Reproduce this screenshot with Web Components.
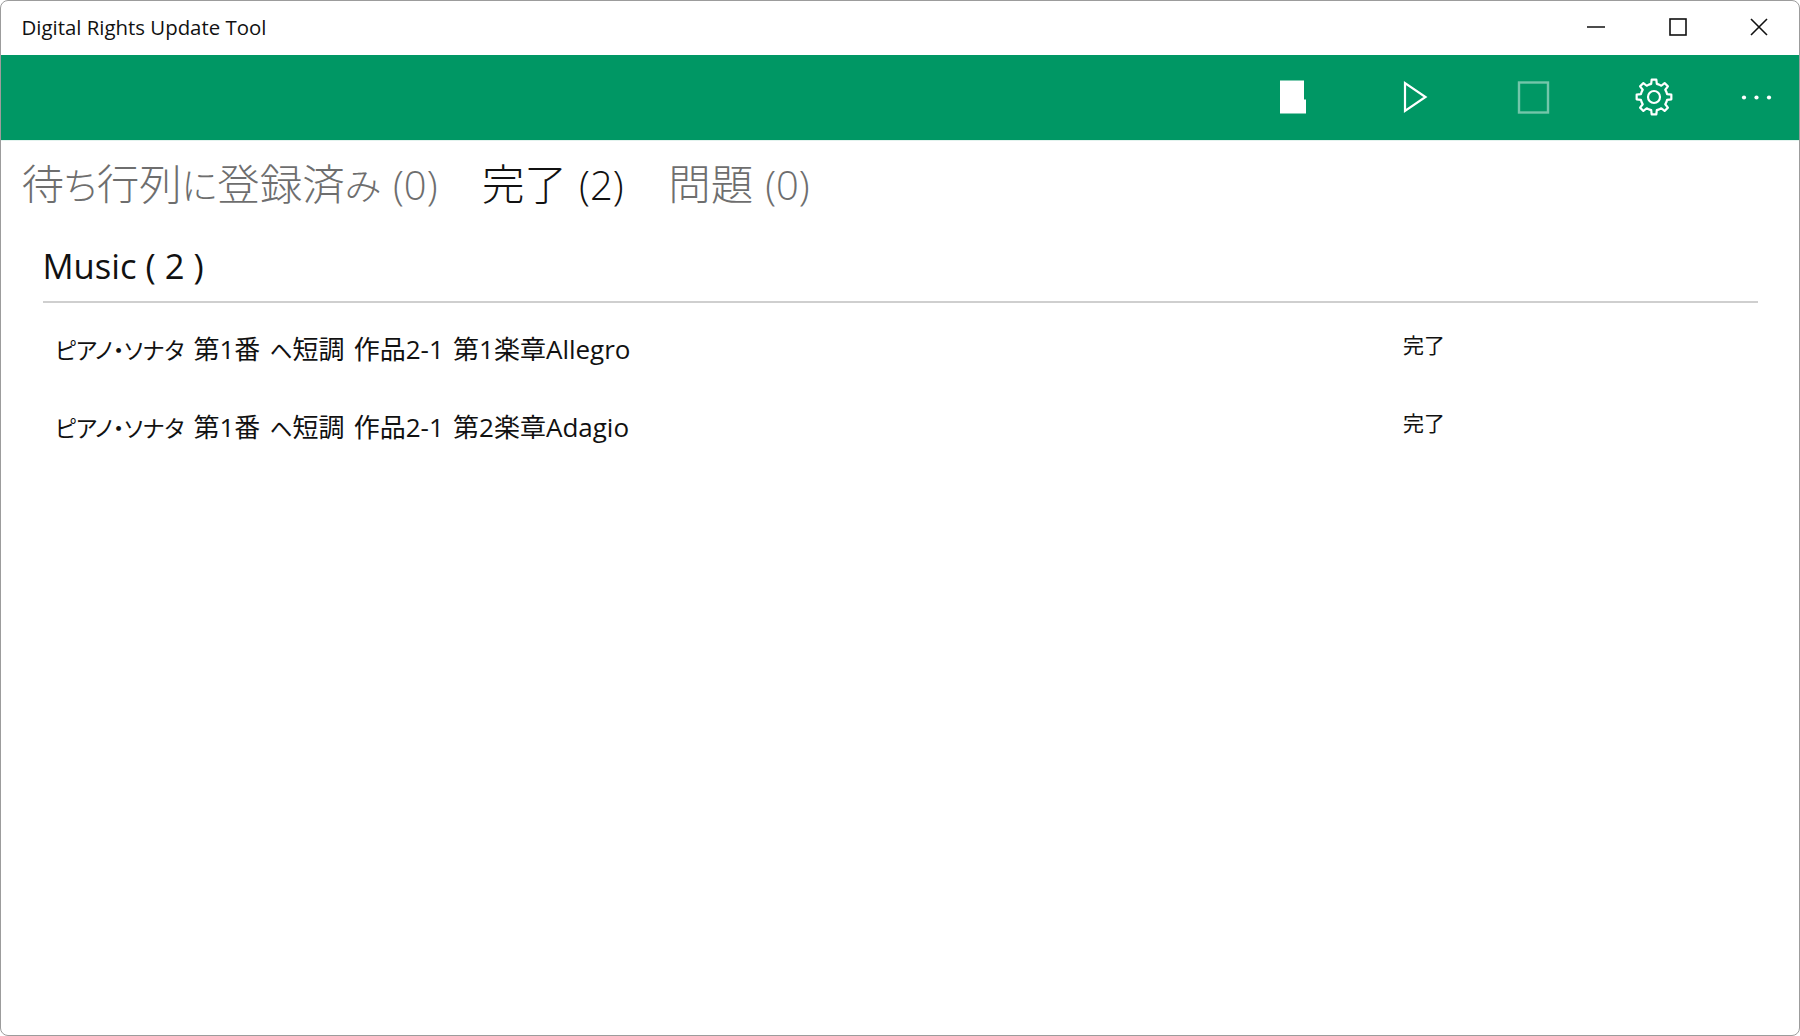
<!DOCTYPE html>
<html lang="ja">
<head>
<meta charset="utf-8">
<title>Digital Rights Update Tool</title>
<style>
  html, body { margin: 0; height: 100%; background: #fff; }
  body { font-family: "Open Sans", "Noto Sans CJK JP", sans-serif; }
  /* the original font draws kana smaller than kanji */
  .kana { font-size: .87em; }
</style>
</head>
<body>
<drm-window>
  <drm-titlebar slot="titlebar" label="Digital Rights Update Tool"></drm-titlebar>
  <drm-toolbar slot="toolbar">
    <drm-button icon="doc"></drm-button>
    <drm-button icon="play"></drm-button>
    <drm-button icon="stop" disabled></drm-button>
    <drm-button icon="gear"></drm-button>
    <drm-button icon="more" wide></drm-button>
  </drm-toolbar>
  <drm-tabs>
    <drm-tab count="(0)">待<span class="kana">ち</span>行列<span class="kana">に</span>登録済<span class="kana">み</span></drm-tab>
    <drm-tab count="(2)" active>完了</drm-tab>
    <drm-tab count="(0)">問題</drm-tab>
  </drm-tabs>
  <drm-group label="Music ( 2 )">
    <drm-row status="完了"><span class="kana">ピアノ・ソナタ</span> 第1番 <span class="kana">ヘ</span>短調 作品2-1 第1楽章Allegro</drm-row>
    <drm-row status="完了"><span class="kana">ピアノ・ソナタ</span> 第1番 <span class="kana">ヘ</span>短調 作品2-1 第2楽章Adagio</drm-row>
  </drm-group>
</drm-window>

<script>
(function() {
  const FONT = '"Open Sans", "Noto Sans CJK JP", sans-serif'
  const CJK = '"Noto Sans CJK JP", sans-serif'

  // gear outline, built from teeth so the strokes stay even
  function gearPath() {
    const teeth = 8, ro = 17.5, ri = 13.4, cx = 21, cy = 20
    let d = ''
    for (let i = 0; i < teeth; i++) {
      const a = (i / teeth) * Math.PI * 2 - Math.PI / 2
      const step = Math.PI * 2 / teeth
      const pts = [
        [ri, a - step * 0.5], [ri, a - step * 0.27],
        [ro, a - step * 0.17], [ro, a + step * 0.17],
        [ri, a + step * 0.27]
      ]
      pts.forEach(([r, t], j) => {
        const x = (cx + r * Math.cos(t)).toFixed(2)
        const y = (cy + r * Math.sin(t)).toFixed(2)
        d += (i === 0 && j === 0 ? 'M' : 'L') + x + ' ' + y
      })
    }
    return d + 'Z'
  }

  const ICONS = {
    doc: '<path fill="#fff" d="M7 3.5h24v19h2v14H7z"/>',
    play: '<path fill="none" stroke="#fff" stroke-width="2.2" d="M12 6v28L32.5 20z"/>',
    stop: '<rect x="6" y="5.5" width="29" height="30" fill="none" stroke="#fff" stroke-opacity=".45" stroke-width="2.4"/>',
    gear: '<path fill="none" stroke="#fff" stroke-width="2.2" stroke-linejoin="round" d="' + gearPath() + '"/><circle cx="21" cy="20" r="6" fill="none" stroke="#fff" stroke-width="2.2"/>',
    more: '<circle cx="8" cy="20.5" r="2.1" fill="#fff"/><circle cx="20.5" cy="20.5" r="2.1" fill="#fff"/><circle cx="33" cy="20.5" r="2.1" fill="#fff"/>'
  }

  // Outer frame with the window border and rounded corners
  class DrmWindow extends HTMLElement {
    constructor() {
      super()
      this.attachShadow({ mode: 'open' }).innerHTML = `
        <style>
          :host { display: flex; flex-direction: column; box-sizing: border-box; height: 1036px;
            border: 1.5px solid #9c9c9c; border-radius: 8px; overflow: hidden; background: #fff; }
        </style>
        <slot name="titlebar"></slot>
        <slot name="toolbar"></slot>
        <slot></slot>
      `
    }
  }

  class DrmTitlebar extends HTMLElement {
    constructor() {
      super()
      this.attachShadow({ mode: 'open' }).innerHTML = `
        <style>
          :host { display: flex; align-items: center; box-sizing: border-box; height: 53.5px;
            padding: 0 0 1px 20.5px; color: #111; font: 20.4px ${FONT}; }
          #label { flex: 1; }
          .ctl { width: 81.5px; display: flex; align-items: center; justify-content: center; }
          .ctl:nth-child(3) { margin-right: 1px; }
          .ctl:last-child { width: 80px; }
          svg { width: 18px; height: 18px; display: block; }
        </style>
        <div id="label">${this.getAttribute('label')}</div>
        <div class="ctl"><svg viewBox="0 0 18 18"><path d="M0 9h18" stroke="#111" stroke-width="1.6"/></svg></div>
        <div class="ctl"><svg viewBox="0 0 18 18"><rect x="1" y="1" width="16" height="16" fill="none" stroke="#111" stroke-width="1.6"/></svg></div>
        <div class="ctl"><svg viewBox="0 0 18 18"><path d="M1 1l16 16M17 1L1 17" stroke="#111" stroke-width="1.6"/></svg></div>
      `
    }
  }

  class DrmToolbar extends HTMLElement {
    constructor() {
      super()
      this.attachShadow({ mode: 'open' }).innerHTML = `
        <style>
          :host { display: flex; justify-content: flex-end; align-items: center; height: 85px;
            background: #009764; box-shadow: 0 1px 0 #e2f3ee; }
        </style>
        <slot></slot>
      `
    }
  }

  class DrmButton extends HTMLElement {
    constructor() {
      super()
      const icon = ICONS[this.getAttribute('icon')] || ''
      this.attachShadow({ mode: 'open' }).innerHTML = `
        <style>
          :host { display: flex; align-items: center; justify-content: center; width: 120px; height: 85px; }
          :host([wide]) { width: 86px; }
          svg { width: 40px; height: 40px; display: block; }
        </style>
        <svg viewBox="0 0 40 40">${icon}</svg>
      `
    }
  }

  class DrmTabs extends HTMLElement {
    constructor() {
      super()
      this.attachShadow({ mode: 'open' }).innerHTML = `
        <style>
          :host { display: flex; gap: 44.5px; padding: 17.5px 0 0 20.5px; height: 64.5px; }
        </style>
        <slot></slot>
      `
    }
  }

  class DrmTab extends HTMLElement {
    constructor() {
      super()
      this.attachShadow({ mode: 'open' }).innerHTML = `
        <style>
          :host { display: block; font: 300 42.5px/50px ${CJK}; font-feature-settings: "palt"; color: #6e6e6e; white-space: nowrap; }
          :host([active]) { color: #111; }
          #count { font: 300 40px/50px ${FONT}; margin-left: 12px; }
        </style>
        <slot></slot><span id="count">${this.getAttribute('count')}</span>
      `
    }
  }

  class DrmGroup extends HTMLElement {
    constructor() {
      super()
      this.attachShadow({ mode: 'open' }).innerHTML = `
        <style>
          :host { display: block; padding: 0 41px 0 41.5px; }
          #head { font: 34.6px/50px ${FONT}; color: #111; padding-top: 19px; padding-bottom: 10px;
            border-bottom: 2px solid #cfcfcf; }
          #rows { padding-top: 6px; }
        </style>
        <div id="head">${this.getAttribute('label')}</div>
        <div id="rows"><slot></slot></div>
      `
    }
  }

  class DrmRow extends HTMLElement {
    constructor() {
      super()
      this.attachShadow({ mode: 'open' }).innerHTML = `
        <style>
          :host { display: flex; align-items: center; height: 78px; padding-left: 12.5px; color: #111; }
          #title { width: 1348px; font: 26px ${FONT}; font-feature-settings: "palt"; word-spacing: 2.5px; white-space: nowrap; }
          #status { font: 21px ${FONT}; margin-top: -7px; }
        </style>
        <div id="title"><slot></slot></div>
        <div id="status">${this.getAttribute('status')}</div>
      `
    }
  }

  customElements.define('drm-window', DrmWindow)
  customElements.define('drm-titlebar', DrmTitlebar)
  customElements.define('drm-toolbar', DrmToolbar)
  customElements.define('drm-button', DrmButton)
  customElements.define('drm-tabs', DrmTabs)
  customElements.define('drm-tab', DrmTab)
  customElements.define('drm-group', DrmGroup)
  customElements.define('drm-row', DrmRow)
})()
</script>
</body>
</html>
